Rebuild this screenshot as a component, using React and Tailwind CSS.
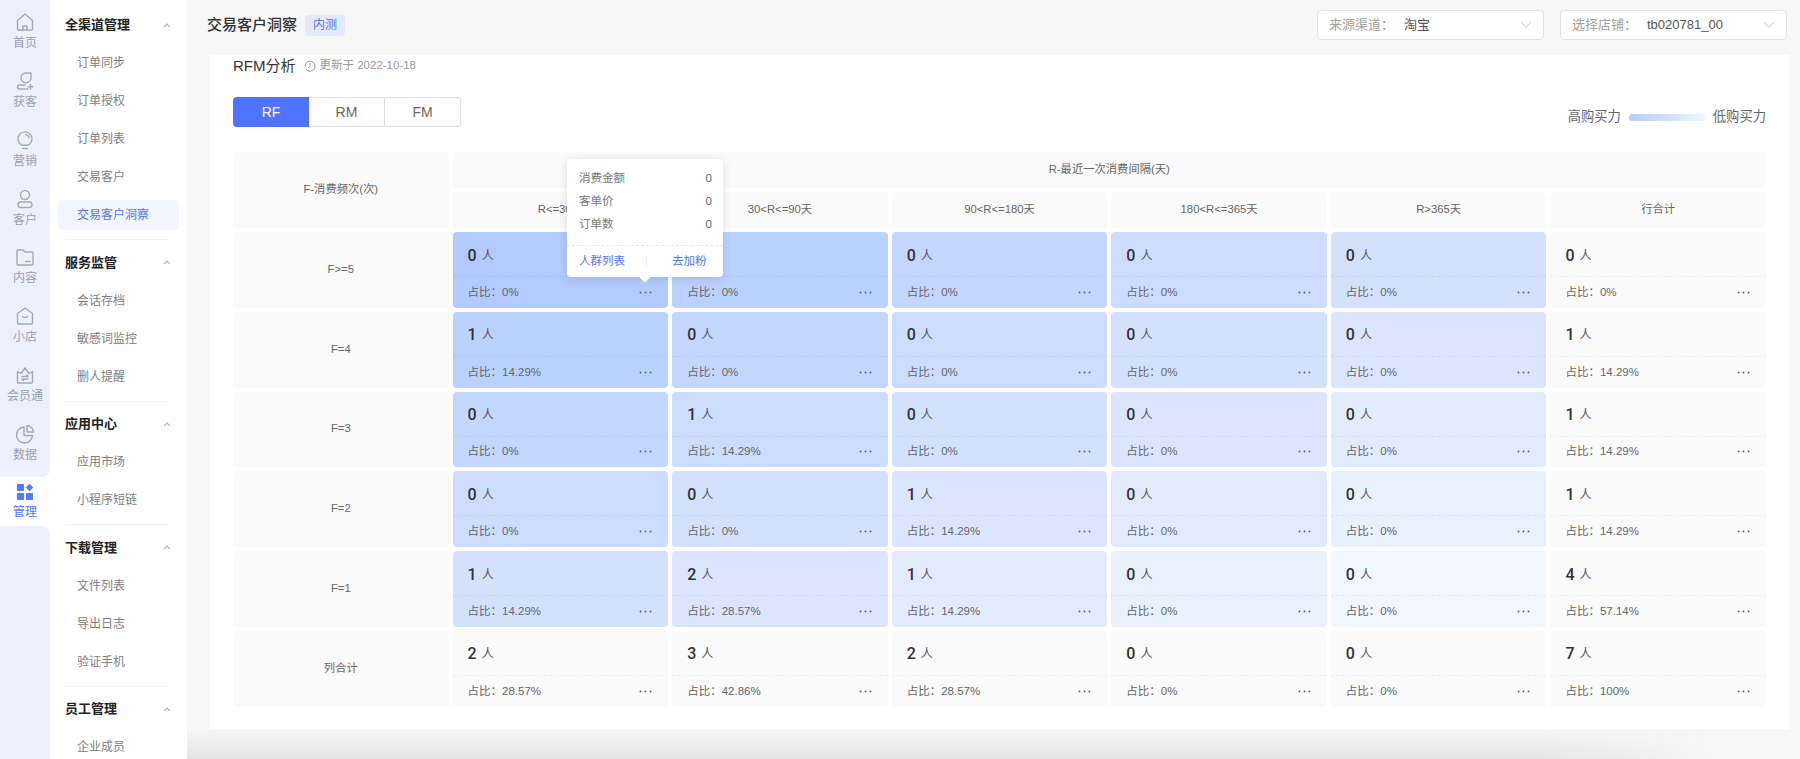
import React from 'react';

const railColor = '#a3a8c0';

const icons = {
    home: (
        <>
            <path d="M2.5 8.5 10 2l7.5 6.5V17a1 1 0 0 1-1 1h-13a1 1 0 0 1-1-1z" />
            <path d="M8 18v-4h4v4" />
        </>
    ),
    acquire: (
        <>
            <path d="M6 7.500a5 5 0 0 1 5-5.500h5v5a5 5 0 0 1-5.500 4.800A5 5 0 0 1 6 7.500z" />
            <path d="M10 14H4.500a2 2 0 0 0 0 4H13" />
            <path d="M15.500 13.500v4.500M13.300 15.700h4.500" />
        </>
    ),
    bulb: (
        <>
            <path d="M7 15.200a7 7 0 1 1 6 0H7z" />
            <path d="M7.500 18.500h5M11 4.500a4 4 0 0 1 3 3" />
        </>
    ),
    user: (
        <>
            <circle cx="10" cy="6" r="4.500" />
            <rect x="3" y="13" width="14" height="5.500" rx="2.700" />
        </>
    ),
    folder: (
        <>
            <path d="M2 4a1 1 0 0 1 1-1h5l2 2h7a1 1 0 0 1 1 1v11a1 1 0 0 1-1 1H3a1 1 0 0 1-1-1z" />
            <path d="M10.500 14.500H15" />
        </>
    ),
    shop: (
        <>
            <path d="M2.500 7.500 10 2l7.500 5.500V17a1 1 0 0 1-1 1h-13a1 1 0 0 1-1-1z" />
            <path d="M7.500 10.500a3 2.500 0 0 0 5 0" />
        </>
    ),
    crown: (
        <>
            <path d="M2.500 6.500 6 8.500 10 3l4 5.500 3.500-2V17a1 1 0 0 1-1 1h-13a1 1 0 0 1-1-1z" />
            <path d="M7 11.500h6l-1.500-1.500M13 14H7l1.500 1.500" />
        </>
    ),
    pie: (
        <>
            <path d="M9 3a8 8 0 1 0 8.500 8.500H9z" />
            <path d="M12 1.500a7 7 0 0 1 6.500 6.500H12z" />
        </>
    ),
};

const railItems = [
    ['首页', 'home'],
    ['获客', 'acquire'],
    ['营销', 'bulb'],
    ['客户', 'user'],
    ['内容', 'folder'],
    ['小店', 'shop'],
    ['会员通', 'crown'],
    ['数据', 'pie'],
];

const menu = [
    { title: '全渠道管理', items: ['订单同步', '订单授权', '订单列表', '交易客户', '交易客户洞察'] },
    { title: '服务监管', items: ['会话存档', '敏感词监控', '删人提醒'] },
    { title: '应用中心', items: ['应用市场', '小程序短链'] },
    { title: '下载管理', items: ['文件列表', '导出日志', '验证手机'] },
    { title: '员工管理', items: ['企业成员'] },
];

const colHeads = ['R<=30天', '30<R<=90天', '90<R<=180天', '180<R<=365天', 'R>365天', '行合计'];

const rows = [
    {
        label: 'F>=5',
        cells: [
            ['0', '0%', 'bg-[#b2cafe]'],
            ['0', '0%', 'bg-[#bbd1fd]'],
            ['0', '0%', 'bg-[#c3d6fd]'],
            ['0', '0%', 'bg-[#ccdcfd]'],
            ['0', '0%', 'bg-[#d3e1fd]'],
            ['0', '0%', 'bg-[#fafafa]'],
        ],
    },
    {
        label: 'F=4',
        cells: [
            ['1', '14.29%', 'bg-[#bbd1fd]'],
            ['0', '0%', 'bg-[#c3d6fd]'],
            ['0', '0%', 'bg-[#ccdcfd]'],
            ['0', '0%', 'bg-[#d3e1fd]'],
            ['0', '0%', 'bg-[#dbe6fe]'],
            ['1', '14.29%', 'bg-[#fafafa]'],
        ],
    },
    {
        label: 'F=3',
        cells: [
            ['0', '0%', 'bg-[#c3d6fd]'],
            ['1', '14.29%', 'bg-[#ccdcfd]'],
            ['0', '0%', 'bg-[#d3e1fd]'],
            ['0', '0%', 'bg-[#dbe6fe]'],
            ['0', '0%', 'bg-[#e2ebfe]'],
            ['1', '14.29%', 'bg-[#fafafa]'],
        ],
    },
    {
        label: 'F=2',
        cells: [
            ['0', '0%', 'bg-[#ccdcfd]'],
            ['0', '0%', 'bg-[#d3e1fd]'],
            ['1', '14.29%', 'bg-[#dbe6fe]'],
            ['0', '0%', 'bg-[#e2ebfe]'],
            ['0', '0%', 'bg-[#e9f0fe]'],
            ['1', '14.29%', 'bg-[#fafafa]'],
        ],
    },
    {
        label: 'F=1',
        cells: [
            ['1', '14.29%', 'bg-[#d3e1fd]'],
            ['2', '28.57%', 'bg-[#dbe6fe]'],
            ['1', '14.29%', 'bg-[#e2ebfe]'],
            ['0', '0%', 'bg-[#e9f0fe]'],
            ['0', '0%', 'bg-[#f1f6ff]'],
            ['4', '57.14%', 'bg-[#fafafa]'],
        ],
    },
    {
        label: '列合计',
        cells: [
            ['2', '28.57%', 'bg-[#fafafa]'],
            ['3', '42.86%', 'bg-[#fafafa]'],
            ['2', '28.57%', 'bg-[#fafafa]'],
            ['0', '0%', 'bg-[#fafafa]'],
            ['0', '0%', 'bg-[#fafafa]'],
            ['7', '100%', 'bg-[#fafafa]'],
        ],
    },
];

const RailItem = ({ label, icon }) => (
    <div className="h-[58.75px] flex flex-col items-center justify-center gap-[3px]">
        <svg viewBox="0 0 20 20" width="20" height="20" fill="none" stroke={railColor} strokeWidth="1.400" strokeLinecap="round" strokeLinejoin="round">
            {icons[icon]}
        </svg>
        <span className="text-xs leading-[17px] text-[#9a9eb4]">{label}</span>
    </div>
);

const Rail = () => (
    <div className="w-[50px] shrink-0 flex flex-col bg-white">
        <div className="h-[477px] pt-[3px] bg-[#edf0fd] rounded-br-lg">
            {railItems.map(([label, icon]) => (
                <RailItem key={label} label={label} icon={icon} />
            ))}
        </div>
        <div className="h-[49px] flex flex-col items-center justify-center gap-[3px]">
            <svg viewBox="0 0 18 18" width="18" height="18" fill="#4f7dff">
                <rect x="1" y="1" width="7" height="7" rx="0.500" />
                <rect x="1" y="10" width="7" height="7" rx="0.500" />
                <rect x="10" y="10" width="7" height="7" rx="0.500" />
                <path d="M13.500 0.800 17.200 4.500 13.500 8.200 9.800 4.500z" />
            </svg>
            <span className="text-xs leading-[17px] text-[#4f73ff]">管理</span>
        </div>
        <div className="flex-1 bg-[#edf0fd] rounded-tr-lg" />
    </div>
);

const SubMenu = () => (
    <div className="w-[137px] shrink-0 bg-white pt-[6px]">
        {menu.map((group, i) => (
            <div key={group.title}>
                <div className="h-[38px] pl-[15px] pr-[16px] flex items-center justify-between">
                    <span className="text-[13px] font-bold text-[#222]">{group.title}</span>
                    <svg viewBox="0 0 8 5" width="8" height="5" fill="none" stroke="#b5b5b5" strokeWidth="1.200">
                        <path d="M1 4 4 1l3 3" />
                    </svg>
                </div>
                {group.items.map((item) => (
                    <div key={item} className="h-[38px] flex items-center px-[8px]">
                        <div
                            className={
                                item === '交易客户洞察'
                                    ? 'h-[30px] w-[122px] pl-[19px] flex items-center rounded-sm bg-[#f3f5fe] text-xs text-[#4f73ff]'
                                    : 'h-[30px] w-[122px] pl-[19px] flex items-center text-xs text-[#808080]'
                            }
                        >
                            {item}
                        </div>
                    </div>
                ))}
                {i < menu.length - 1 && <div className="mt-[5px] mb-[3.5px] ml-[15px] w-[103px] h-px bg-[#f2f2f2]" />}
            </div>
        ))}
    </div>
);

const Select = ({ label, value }) => (
    <div className="w-[227px] h-[30px] pl-[11px] pr-[12px] flex items-center bg-white border border-[#e3e3e3] rounded-sm text-[13px]">
        <span className="w-[75px] text-[#a0a0a0]">{label}</span>
        <span className="flex-1 text-[#555]">{value}</span>
        <svg viewBox="0 0 10 6" width="10" height="6" fill="none" stroke="#c4c4c4" strokeWidth="1">
            <path d="M0.500 0.500 5 5.500l4.500-5" />
        </svg>
    </div>
);

const Dots = () => (
    <svg viewBox="0 0 13 3" width="13" height="3" fill="#666">
        <circle cx="1.500" cy="1.500" r="1" />
        <circle cx="6.500" cy="1.500" r="1" />
        <circle cx="11.500" cy="1.500" r="1" />
    </svg>
);

const Cell = ({ count, pct, bg }) => (
    <div className={`${bg} rounded-sm flex flex-col`}>
        <div className="h-[45px] shrink-0 pt-[3px] pl-[15px] pr-4 flex items-center gap-[5px] border-b border-dashed border-black/5">
            <span className="font-['Roboto',sans-serif] font-medium text-base text-[#333]">{count}</span>
            <span className="text-xs text-[#555]">人</span>
        </div>
        <div className="flex-1 pl-[15px] pr-4 flex items-center justify-between text-[11.5px] text-[#666]">
            <span>占比：{pct}</span>
            <Dots />
        </div>
    </div>
);

const HeadCell = ({ className, children }) => (
    <div className={`bg-[#fafafa] rounded-sm pb-[1px] flex items-center justify-center text-[11.3px] text-[#666] ${className || ''}`}>{children}</div>
);

const Popover = () => (
    <div className="absolute left-[334px] top-[7px] w-[156px] h-[118px] bg-white rounded-sm shadow-[0_2px_10px_rgba(0,0,0,0.12)] text-[11.5px]">
        <div className="pl-3 pr-[11px] pt-[8px] h-[87px] border-b border-dashed border-[#e8e8e8] text-[#777]">
            {['消费金额', '客单价', '订单数'].map((name) => (
                <div key={name} className="h-[23px] flex items-center justify-between">
                    <span>{name}</span>
                    <span className="text-[#666]">0</span>
                </div>
            ))}
        </div>
        <div className="h-[31px] flex items-center text-[#4f73ff]">
            <span className="pl-3 w-[79px]">人群列表</span>
            <span className="w-px h-[10px] bg-[#eee]" />
            <span className="pl-[25px]">去加粉</span>
        </div>
        <div className="absolute left-[74px] -bottom-[4px] w-2 h-2 bg-white rotate-45" />
    </div>
);

const RfmTable = () => (
    <div className="relative mt-[25px] grid grid-cols-7 grid-rows-[36px_36px_repeat(6,75.75px)] gap-1">
        <HeadCell className="row-span-2">F-消费频次(次)</HeadCell>
        <HeadCell className="col-span-6">R-最近一次消费间隔(天)</HeadCell>
        {colHeads.map((head) => (
            <HeadCell key={head}>{head}</HeadCell>
        ))}
        {rows.map((row) => (
            <React.Fragment key={row.label}>
                <HeadCell>{row.label}</HeadCell>
                {row.cells.map(([count, pct, bg], i) => (
                    <Cell key={i} count={count} pct={pct} bg={bg} />
                ))}
            </React.Fragment>
        ))}
        <Popover />
    </div>
);

const App = () => {
    return (
        <div className="w-[1800px] h-[759px] overflow-hidden flex bg-[#f7f7f7] font-['Liberation_Sans','Noto_Sans_CJK_SC',sans-serif]">
            <Rail />
            <SubMenu />
            <div className="flex-1 min-w-0 flex flex-col">
                <div className="h-[55px] shrink-0 pl-[20px] pr-[13px] pb-[5px] flex items-center justify-between">
                    <div className="flex items-center gap-2">
                        <span className="text-[15px] font-medium text-[#333]">交易客户洞察</span>
                        <span className="w-[40px] h-[21px] flex items-center justify-center rounded-sm bg-[#e6ebfb] text-xs text-[#4f73ff]">内测</span>
                    </div>
                    <div className="flex gap-4">
                        <Select label="来源渠道：" value="淘宝" />
                        <Select label="选择店铺：" value="tb020781_00" />
                    </div>
                </div>
                <div className="h-[674px] shrink-0 ml-[23px] mr-[11px] px-[23px] bg-white">
                    <div className="pt-[1px] h-[21px] flex items-center gap-2">
                        <span className="text-[15px] text-[#333]">RFM分析</span>
                        <span className="flex items-center gap-1 text-[11.5px] text-[#999]">
                            <svg viewBox="0 0 12 12" width="12" height="12" fill="none" stroke="#999" strokeWidth="1">
                                <path d="M2.200 9.500A5 5 0 1 0 1 6M6 3.200V6.300L4.200 7.800" />
                            </svg>
                            更新于 2022-10-18
                        </span>
                    </div>
                    <div className="mt-[21px] flex items-end justify-between">
                        <div className="flex h-[30px] text-sm text-[#666]">
                            <div className="w-[76px] flex items-center justify-center rounded-l-sm bg-[#4f73ff] text-white">RF</div>
                            <div className="w-[76px] flex items-center justify-center border-y border-r border-[#dfdfdf]">RM</div>
                            <div className="w-[76px] flex items-center justify-center border-y border-r border-[#dfdfdf] rounded-r-sm">FM</div>
                        </div>
                        <div className="h-[20px] flex items-center gap-2 text-[13.3px] text-[#666]">
                            <span>高购买力</span>
                            <span className="w-[76px] h-[7px] rounded-sm bg-gradient-to-r from-[#b7ccfb] to-[#f0f5ff]" />
                            <span>低购买力</span>
                        </div>
                    </div>
                    <RfmTable />
                </div>
                <div className="flex-1">
                    <div className="w-[1530px] h-full bg-gradient-to-b from-[#f7f7f7] to-[#e4e4e4] [mask-image:linear-gradient(to_right,black_88%,transparent)]" />
                </div>
            </div>
        </div>
    );
};

export default App;
